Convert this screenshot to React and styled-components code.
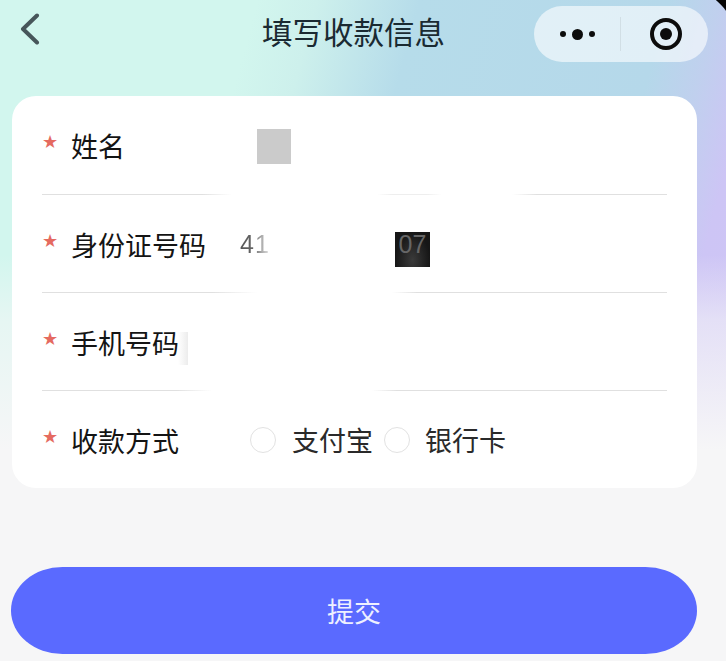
import styled, { createGlobalStyle } from "styled-components";

const fields = [
  { id: 1, label: "姓名" },
  { id: 2, label: "身份证号码" },
  { id: 3, label: "手机号码" },
];

const GlobalStyle = createGlobalStyle`
  html, body {
    margin: 0;
    padding: 0;
  }
  body {
    font-family: "Noto Sans CJK SC", "Liberation Sans", sans-serif;
  }
`;

const App = () => {
  return (
    <Page>
      <GlobalStyle />
      <Corner />
      <NavBar>
        <BackButton>
          <svg width="20" height="32" viewBox="0 0 20 32" fill="none">
            <path d="M17 2.5 3 16l14 13.5" stroke="#47565a" strokeWidth="4" strokeLinecap="round" strokeLinejoin="round" />
          </svg>
        </BackButton>
        <Title>填写收款信息</Title>
        <Capsule>
          <Dots>
            <Dot />
            <Dot $big />
            <Dot />
          </Dots>
          <CapsuleLine />
          <Target>
            <TargetCore />
          </Target>
        </Capsule>
      </NavBar>

      <Card>
        <Row>
          <Star>★</Star>
          <Label>{fields[0].label}</Label>
          <GraySquare />
        </Row>
        <Divider $stops="#e0e0e0 0, #e0e0e0 160px, transparent 190px, transparent 335px, #eee 350px, #eee 385px, transparent 400px, transparent 470px, #e0e0e0 495px" />
        <Row>
          <Star>★</Star>
          <Label>{fields[1].label}</Label>
          <IdStart>41</IdStart>
          <DarkPatch>07</DarkPatch>
        </Row>
        <Divider $stops="#e0e0e0 0, #e0e0e0 170px, transparent 215px, transparent 350px, #e0e0e0 375px" />
        <Row>
          <Star>★</Star>
          <Label $fade>{fields[2].label}</Label>
        </Row>
        <Divider $stops="#e0e0e0 0, #e0e0e0 135px, transparent 170px, transparent 330px, #e0e0e0 355px" />
        <Row>
          <Star>★</Star>
          <Label>收款方式</Label>
          <Options>
            <Radio />
            <OptionText>支付宝</OptionText>
            <Radio />
            <OptionText>银行卡</OptionText>
          </Options>
        </Row>
      </Card>

      <SubmitButton>提交</SubmitButton>
    </Page>
  );
};

export default App;

const Page = styled.div`
  position: relative;
  width: 726px;
  height: 661px;
  overflow: hidden;
  box-sizing: border-box;
  padding: 0 29px 0 12px;
  background:
    linear-gradient(to bottom, rgba(246, 246, 247, 0) 0, rgba(246, 246, 247, 0) 255px, rgba(246, 246, 247, 0.55) 320px, #f6f6f7 450px),
    linear-gradient(105deg, #d2f6ee 0, #d2f6ee 30%, #cdf0ec 37%, #b6dcea 49%, #b5d8ea 78%, #c0d0ee 84%, #cdc5f5 90%, #d0c5f6 100%) 0 0 / 726px 490px no-repeat,
    #f6f6f7;
`;

const Corner = styled.div`
  position: absolute;
  top: 0;
  right: 0;
  width: 20px;
  height: 30px;
  background: radial-gradient(circle at -28px 46px, transparent 59px, #050505 60px);
`;

const NavBar = styled.div`
  display: flex;
  align-items: flex-start;
  height: 96px;
  margin-right: -11px;
`;

const BackButton = styled.div`
  width: 20px;
  height: 32px;
  margin: 13px 0 0 8px;
`;

const Title = styled.div`
  margin: 9px 0 0 222px;
  font-size: 30.5px;
  line-height: 44px;
  color: #1a2a32;
  white-space: nowrap;
`;

const Capsule = styled.div`
  display: flex;
  align-items: center;
  width: 174px;
  height: 56px;
  margin: 6px 0 0 auto;
  border-radius: 28px;
  background: rgba(255, 255, 255, 0.6);
`;

const Dots = styled.div`
  display: flex;
  align-items: center;
  justify-content: center;
  gap: 6px;
  width: 86px;
`;

const Dot = styled.span`
  width: ${(p) => (p.$big ? 11 : 6)}px;
  height: ${(p) => (p.$big ? 11 : 6)}px;
  border-radius: 50%;
  background: #0c0c0c;
`;

const CapsuleLine = styled.div`
  width: 1px;
  height: 34px;
  background: rgba(0, 0, 0, 0.07);
`;

const Target = styled.div`
  display: flex;
  align-items: center;
  justify-content: center;
  box-sizing: border-box;
  width: 32px;
  height: 32px;
  margin-left: 29px;
  border: 4px solid #0c0c0c;
  border-radius: 50%;
`;

const TargetCore = styled.div`
  width: 12px;
  height: 12px;
  border-radius: 50%;
  background: #0c0c0c;
`;

const Card = styled.div`
  display: flex;
  flex-direction: column;
  box-sizing: border-box;
  height: 392px;
  padding: 0 30px;
  border-radius: 24px;
  background: #fff;
`;

const Row = styled.div`
  position: relative;
  display: flex;
  align-items: center;
  height: 98px;
  &:first-child {
    height: 99px;
  }
`;

const Star = styled.span`
  width: 29px;
  margin-bottom: 6px;
  box-sizing: border-box;
  font-family: "DejaVu Sans", sans-serif;
  font-size: 18px;
  line-height: 20px;
  color: #e56a60;
`;

const Label = styled.span`
  position: relative;
  width: 169px;
  margin-top: 2px;
  font-size: 27px;
  line-height: 40px;
  color: #141414;
  white-space: nowrap;
  ${(p) =>
    p.$fade &&
    `
    &::after {
      content: "";
      position: absolute;
      left: 107px;
      top: 9px;
      width: 10px;
      height: 33px;
      background: linear-gradient(to right, #fff, #ececec);
    }
  `}
`;

const GraySquare = styled.div`
  width: 34px;
  height: 35px;
  margin: 2px 0 0 17px;
  background: #cbcbcb;
`;

const IdStart = styled.span`
  width: 155px;
  margin-top: 2px;
  font-family: "Liberation Sans", sans-serif;
  font-size: 25px;
  letter-spacing: 1px;
  background: linear-gradient(to right, #555 0, #666 13px, #ccc 26px);
  background-clip: text;
  color: transparent;
`;

const DarkPatch = styled.div`
  width: 35px;
  height: 35px;
  margin-top: 11px;
  font-family: "Liberation Sans", sans-serif;
  font-size: 25px;
  line-height: 25px;
  text-align: center;
  color: #666;
  background: radial-gradient(ellipse at 50% 80%, #3a3a3a, #161616 70%);
`;

const Divider = styled.div`
  flex: none;
  height: 1px;
  background: linear-gradient(to right, ${(p) => p.$stops});
`;

const Options = styled.div`
  display: flex;
  align-items: center;
  margin-left: 10px;
`;

const Radio = styled.span`
  box-sizing: border-box;
  width: 26px;
  height: 26px;
  border: 1px solid #e2e2e2;
  border-radius: 50%;
  background: #fff;
`;

const OptionText = styled.span`
  margin: 0 11px 0 16px;
  font-size: 27px;
  line-height: 40px;
  color: #2a2a2a;
  &:last-child {
    margin-left: 15px;
  }
`;

const SubmitButton = styled.div`
  display: flex;
  align-items: center;
  justify-content: center;
  height: 87px;
  margin: 79px 0 0 -1px;
  border-radius: 52px / 44px;
  background: #5a6aff;
  font-size: 27px;
  color: #eef0ff;
`;
